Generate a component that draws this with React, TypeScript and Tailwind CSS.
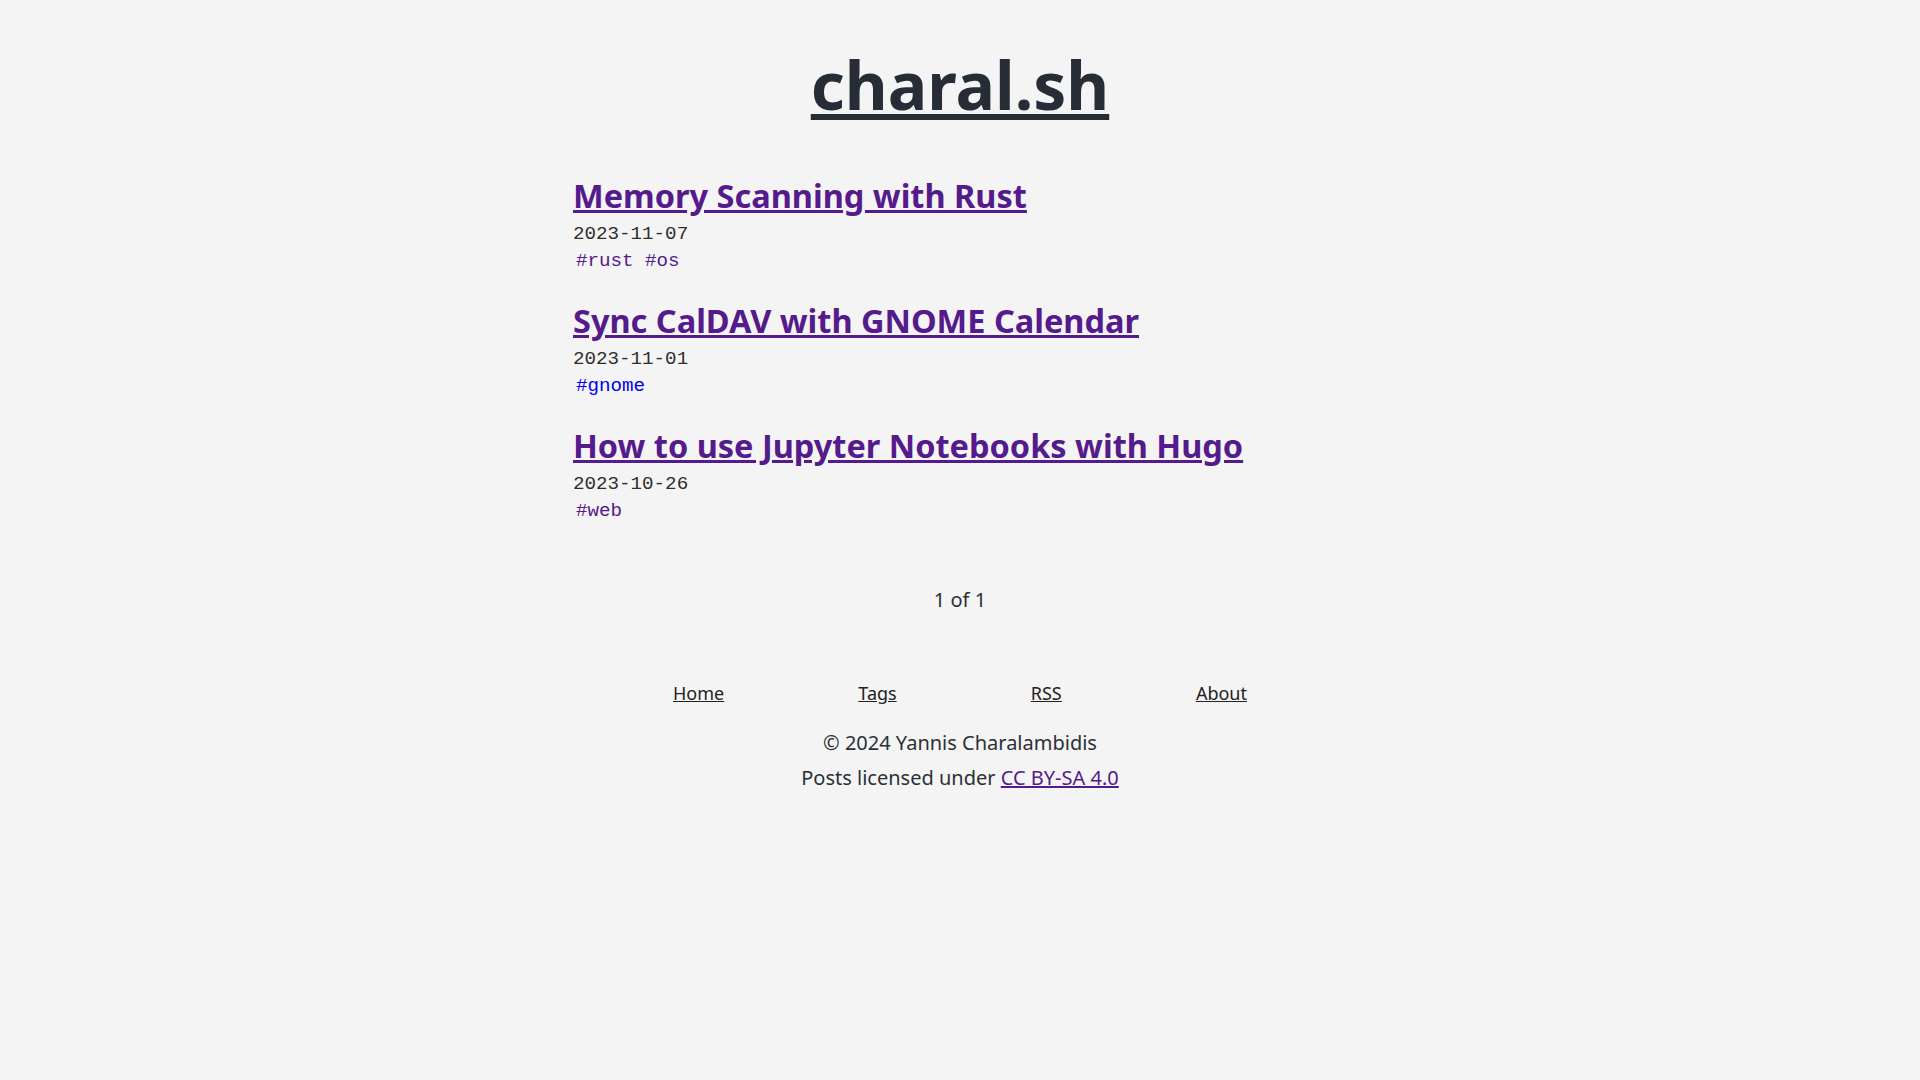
import React from "react";

const posts = [
  { title: "Memory Scanning with Rust", date: "2023-11-07", tags: [{ t: "rust", v: true }, { t: "os", v: true }] },
  { title: "Sync CalDAV with GNOME Calendar", date: "2023-11-01", tags: [{ t: "gnome", v: false }] },
  { title: "How to use Jupyter Notebooks with Hugo", date: "2023-10-26", tags: [{ t: "web", v: true }] },
];

export default function App() {
  return (
    <div className="min-h-screen w-full bg-[#f4f4f4] text-[#2b3036] pt-[43px]" style={{ fontFamily: '"Noto Sans", "Open Sans", sans-serif' }}>
      <div className="max-w-[774px] mx-auto">
        <h1 className="text-center text-[66px] leading-[82px] font-bold text-[#262d36]">
          <a href="#" className="underline">charal.sh</a>
        </h1>

        <div className="mt-[52px] flex flex-col gap-[27px]">
          {posts.map((p) => (
            <div key={p.title}>
              <h2 className="text-[32.5px] leading-[38px] font-bold">
                <a href="#" className="underline text-[#551a8b]">{p.title}</a>
              </h2>
              <div className="mt-[5px] text-[19.2px] leading-[28px] text-[#2e2e2e]" style={{ fontFamily: '"Liberation Mono", monospace' }}>
                {p.date}
              </div>
              <div className="text-[19.2px] leading-[27px] pl-[3px]" style={{ fontFamily: '"Liberation Mono", monospace' }}>
                {p.tags.map((tg, i) => (
                  <React.Fragment key={tg.t}>
                    {i > 0 ? " " : ""}
                    <a href="#" className={tg.v ? "text-[#551a8b]" : "text-[#0000ee]"}>#{tg.t}</a>
                  </React.Fragment>
                ))}
              </div>
            </div>
          ))}
        </div>

        <div className="mt-[61px] text-center text-[20px] leading-[28px]">1 of 1</div>

        <nav className="mt-[66px] w-[574px] mx-auto flex justify-between text-[18px] leading-[27px]">
          <a href="#" className="underline text-[#222]">Home</a>
          <a href="#" className="underline text-[#222]">Tags</a>
          <a href="#" className="underline text-[#222]">RSS</a>
          <a href="#" className="underline text-[#222]">About</a>
        </nav>

        <footer className="mt-[18px] text-center text-[20px] leading-[35px]">
          <div>© 2024 Yannis Charalambidis</div>
          <div>
            Posts licensed under <a href="#" className="underline text-[#551a8b]">CC BY-SA 4.0</a>
          </div>
        </footer>
      </div>
    </div>
  );
}
